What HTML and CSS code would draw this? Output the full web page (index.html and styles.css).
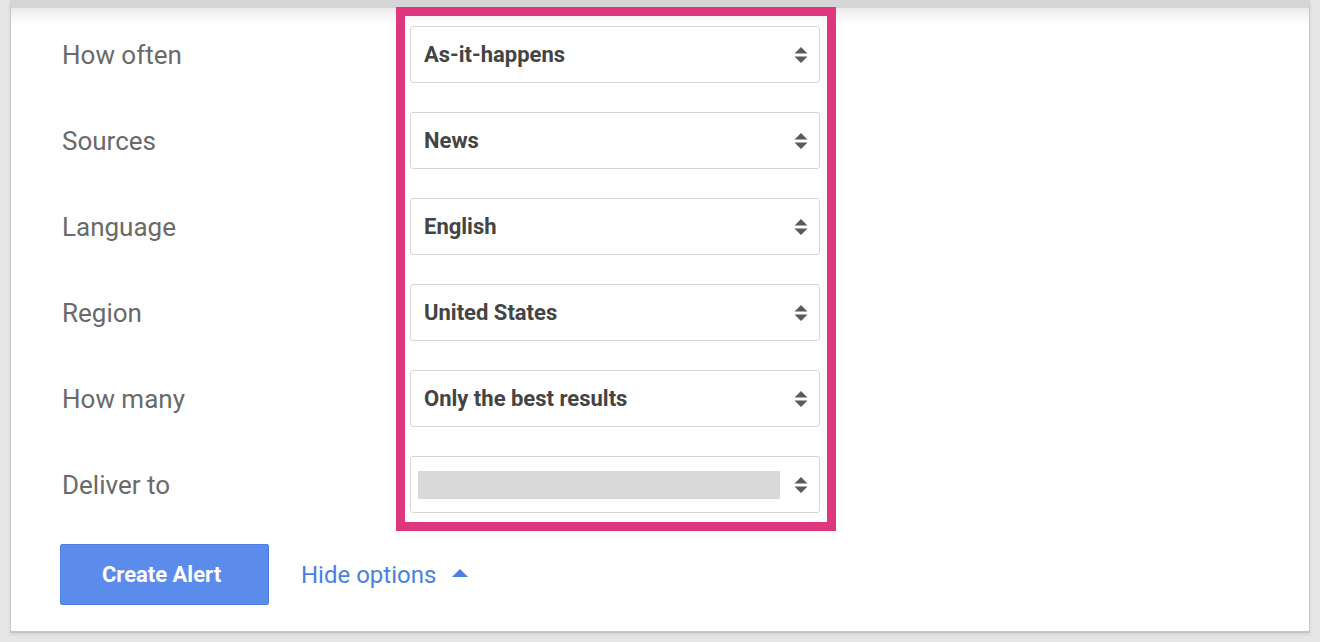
FILE: index.html
```html
<!DOCTYPE html>
<html lang="en">
<head>
  <meta charset="UTF-8">
  <title>Create Alert options</title>
  <link rel="stylesheet" href="styles.css">
</head>
<body>
  <div class="card">
    <div class="form">
      <div class="labels">
        <div class="label">How often</div>
        <div class="label">Sources</div>
        <div class="label">Language</div>
        <div class="label">Region</div>
        <div class="label">How many</div>
        <div class="label">Deliver to</div>
      </div>

      <div class="highlight">
        <div class="select"><span>As-it-happens</span>
          <svg class="arrows" width="14" height="16" viewBox="0 0 14 16"><path d="M7 0 L13.5 6.5 L0.5 6.5 Z M0.5 9.5 L13.5 9.5 L7 16 Z"/></svg></div>
        <div class="select"><span>News</span>
          <svg class="arrows" width="14" height="16" viewBox="0 0 14 16"><path d="M7 0 L13.5 6.5 L0.5 6.5 Z M0.5 9.5 L13.5 9.5 L7 16 Z"/></svg></div>
        <div class="select"><span>English</span>
          <svg class="arrows" width="14" height="16" viewBox="0 0 14 16"><path d="M7 0 L13.5 6.5 L0.5 6.5 Z M0.5 9.5 L13.5 9.5 L7 16 Z"/></svg></div>
        <div class="select"><span>United States</span>
          <svg class="arrows" width="14" height="16" viewBox="0 0 14 16"><path d="M7 0 L13.5 6.5 L0.5 6.5 Z M0.5 9.5 L13.5 9.5 L7 16 Z"/></svg></div>
        <div class="select"><span>Only the best results</span>
          <svg class="arrows" width="14" height="16" viewBox="0 0 14 16"><path d="M7 0 L13.5 6.5 L0.5 6.5 Z M0.5 9.5 L13.5 9.5 L7 16 Z"/></svg></div>
        <div class="select select-hidden"><span class="redacted"></span>
          <svg class="arrows" width="14" height="16" viewBox="0 0 14 16"><path d="M7 0 L13.5 6.5 L0.5 6.5 Z M0.5 9.5 L13.5 9.5 L7 16 Z"/></svg></div>
      </div>
    </div>

    <div class="actions">
      <button class="btn-create">Create Alert</button>
      <a class="toggle" href="#">Hide options
        <svg width="16" height="8" viewBox="0 0 16 8"><path d="M8 0 L16 8 L0 8 Z"/></svg></a>
    </div>
  </div>
</body>
</html>
```

FILE: styles.css
```css
body {
  margin: 0;
  background: #e6e6e6;
  font-family: Roboto, "Liberation Sans", Arial, sans-serif;
  height: 642px;
  overflow: hidden;
}
.card {
  margin: 0 10px;
  height: 633px;
  box-sizing: border-box;
  background: #fff;
  border-left: 1px solid #c9c9c9;
  border-right: 1px solid #c9c9c9;
  border-bottom: 2px solid #c4c4c4;
  border-top: 8px solid #d6d6d6;
  box-shadow: inset 0 16px 16px -12px rgba(0,0,0,0.12), 0 2px 3px rgba(0,0,0,0.08);
  padding-left: 51px;
}
.form {
  display: flex;
}
.labels {
  width: 334px;
  padding-top: 18px;
  display: flex;
  flex-direction: column;
  gap: 29px;
}
.label {
  height: 57px;
  line-height: 58px;
  font-size: 26px;
  color: #6a6a6a;
}
.highlight {
  width: 440px;
  box-sizing: border-box;
  margin-top: -1px;
  border: 9px solid #de377d;
  padding: 10px 7px 9px 5px;
  display: flex;
  flex-direction: column;
  gap: 29px;
}
.select {
  height: 57px;
  box-sizing: border-box;
  border: 1px solid #d6d6d6;
  border-radius: 3px;
  display: flex;
  align-items: center;
  justify-content: space-between;
  padding: 0 11px 0 13px;
  font-size: 22px;
  font-weight: 700;
  color: #444;
}
.select-hidden {
  padding-left: 7px;
}
.redacted {
  width: 362px;
  height: 28px;
  background: #d9d9d9;
}
.arrows {
  fill: #5a5a5a;
}
.actions {
  display: flex;
  align-items: center;
  margin-top: 13px;
}
.btn-create {
  width: 209px;
  height: 61px;
  margin-left: -2px;
  padding: 0 6px 0 0;
  background: #5b8beb;
  border: 1px solid #4d7fe3;
  border-radius: 2px;
  color: #fff;
  font-family: Roboto, "Liberation Sans", Arial, sans-serif;
  font-size: 22px;
  font-weight: 700;
}
.toggle {
  margin-left: 32px;
  font-size: 24px;
  color: #4a7fe3;
  text-decoration: none;
  display: flex;
  align-items: center;
  gap: 16px;
}
.toggle svg {
  fill: #4a7fe3;
  margin-top: -4px;
}
```
